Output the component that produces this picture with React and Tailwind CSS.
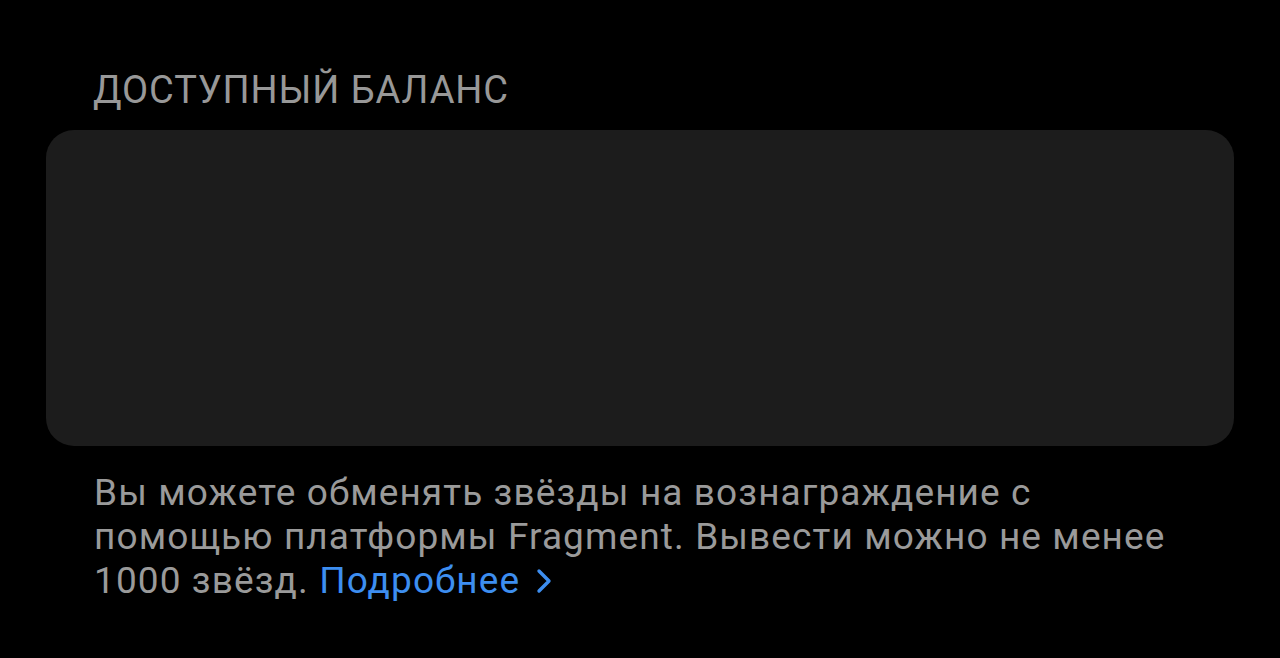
export default function App() {
  return (
    <div className="min-h-[658px] w-full bg-black pt-[68px]" style={{ fontFamily: 'Roboto, "Noto Sans", sans-serif' }}>
      <h2 className="pl-[93px] text-[38px] leading-[44px] tracking-[0.9px] text-[#989898] uppercase">Доступный баланс</h2>
      <div className="mx-[46px] mt-[18px] h-[316px] rounded-[28px] bg-[#1c1c1c]" />
      <p className="mt-[25px] pl-[94px] pr-[20px] text-[37px] leading-[44px] tracking-[1.1px] text-[#9a9a9a]">
        Вы можете обменять звёзды на вознаграждение с<br />
        помощью платформы Fragment. Вывести можно не менее<br />
        1000 звёзд.{' '}
        <span className="inline-flex items-center gap-[16px] text-[#3d8ef0]">
          Подробнее
          <svg width="16" height="26" viewBox="0 0 16 26" fill="none" stroke="currentColor" strokeWidth="3.4" strokeLinecap="round" strokeLinejoin="round">
            <path d="M3 3l10 10-10 10" />
          </svg>
        </span>
      </p>
    </div>
  );
}
